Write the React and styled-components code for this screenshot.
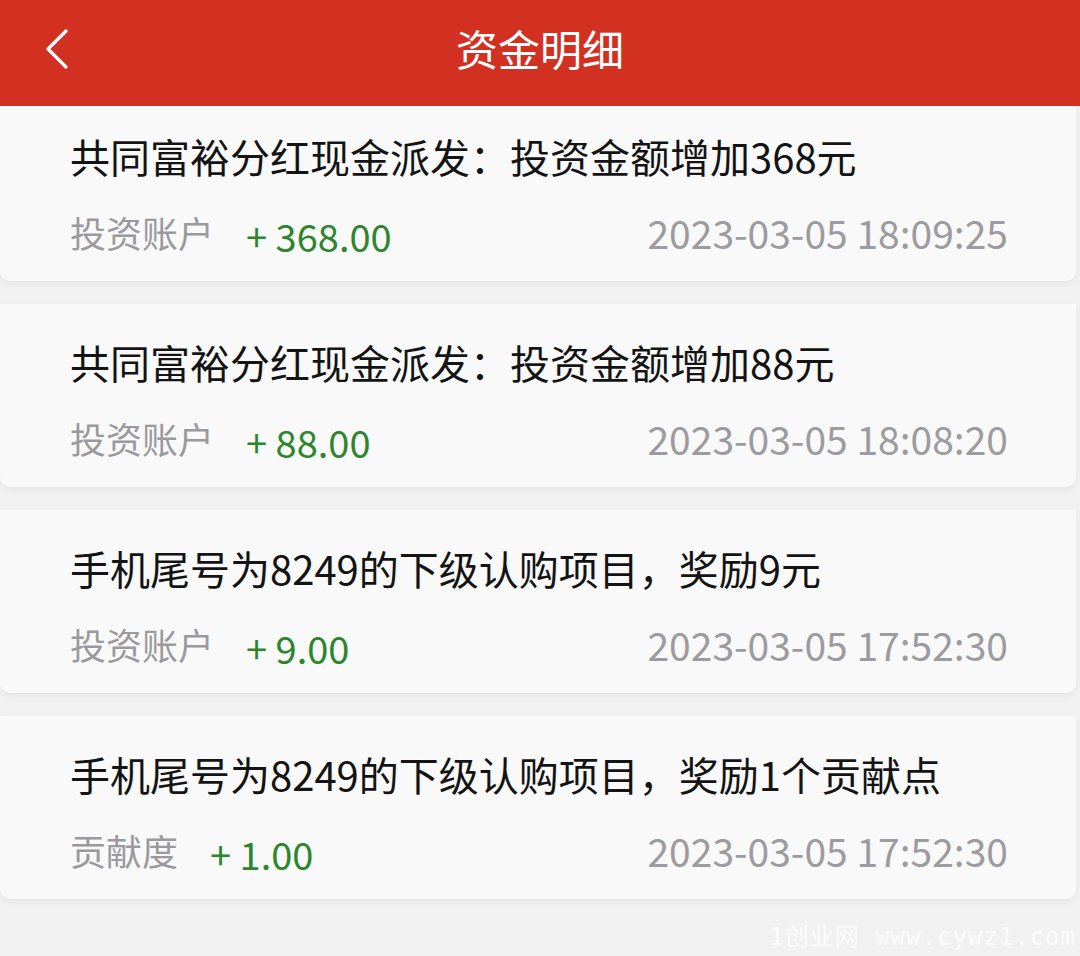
import React from "react";
import styled, { createGlobalStyle } from "styled-components";

const Global = createGlobalStyle`
  html, body { margin: 0; padding: 0; background: #f1f1f1; }
  body { font-family: "Noto Sans CJK SC", "Noto Sans", sans-serif; }
  * { box-sizing: border-box; }
`;

const Page = styled.div`
  position: relative;
  width: 1080px;
  height: 956px;
  overflow: hidden;
  background: #f1f1f1;
`;

const Header = styled.header`
  position: relative;
  z-index: 2;
  height: 106px;
  background: #d23021;
  display: flex;
  align-items: center;
  justify-content: center;
`;

const Back = styled.button`
  position: absolute;
  left: 36px;
  top: 26px;
  width: 40px;
  height: 46px;
  border: 0;
  padding: 0;
  background: none;
  display: flex;
  align-items: center;
  justify-content: center;
`;

const Title = styled.h1`
  margin: 0;
  margin-top: -12px;
  color: #fff;
  font-size: 42px;
  font-weight: 400;
  letter-spacing: 0;
`;

const List = styled.div`
  margin-top: -8px;
  display: flex;
  flex-direction: column;
  gap: 23px;
`;

const Card = styled.div`
  height: 183px;
  margin: 0 4px 0 0;
  background: #f9f9f9;
  border-radius: 0 0 10px 10px;
  box-shadow: 0 3px 6px rgba(0, 0, 0, 0.05);
  padding: 34px 70px 0 70px;
  display: flex;
  flex-direction: column;
`;

const ItemTitle = styled.div`
  font-size: 40px;
  line-height: 48px;
  color: #141414;
  white-space: nowrap;
`;

const Meta = styled.div`
  margin-top: 30px;
  display: flex;
  align-items: center;
  justify-content: space-between;
`;

const Left = styled.div`
  display: flex;
  align-items: baseline;
  gap: 32px;
`;

const Account = styled.span`
  font-size: 36px;
  line-height: 44px;
  color: #9a9a9e;
`;

const Amount = styled.span`
  font-size: 38px;
  line-height: 44px;
  color: #2d862d;
  position: relative;
  top: 4px;
`;

const Time = styled.span`
  font-size: 39px;
  line-height: 44px;
  color: #9c9ca0;
  margin-right: -2px;
`;

const Watermark = styled.div`
  position: absolute;
  right: 4px;
  bottom: 4px;
  font-family: "DejaVu Sans Mono", "Noto Sans CJK SC", monospace;
  font-size: 24px;
  color: rgba(255, 255, 255, 0.8);
  letter-spacing: 1px;
`;

const items = [
  { title: "共同富裕分红现金派发：投资金额增加368元", account: "投资账户", amount: "+ 368.00", time: "2023-03-05 18:09:25" },
  { title: "共同富裕分红现金派发：投资金额增加88元", account: "投资账户", amount: "+ 88.00", time: "2023-03-05 18:08:20" },
  { title: "手机尾号为8249的下级认购项目，奖励9元", account: "投资账户", amount: "+ 9.00", time: "2023-03-05 17:52:30" },
  { title: "手机尾号为8249的下级认购项目，奖励1个贡献点", account: "贡献度", amount: "+ 1.00", time: "2023-03-05 17:52:30" },
];

export default function App() {
  return (
    <Page>
      <Global />
      <Header>
        <Back aria-label="返回">
          <svg width="30" height="44" viewBox="0 0 30 44" fill="none">
            <path d="M25 4 L7 22 L25 40" stroke="#fff" strokeWidth="3.2" strokeLinecap="round" strokeLinejoin="round" />
          </svg>
        </Back>
        <Title>资金明细</Title>
      </Header>
      <List>
        {items.map((it, i) => (
          <Card key={i}>
            <ItemTitle>{it.title}</ItemTitle>
            <Meta>
              <Left>
                <Account>{it.account}</Account>
                <Amount>{it.amount}</Amount>
              </Left>
              <Time>{it.time}</Time>
            </Meta>
          </Card>
        ))}
      </List>
      <Watermark>1创业网 www.cywz1.com</Watermark>
    </Page>
  );
}
